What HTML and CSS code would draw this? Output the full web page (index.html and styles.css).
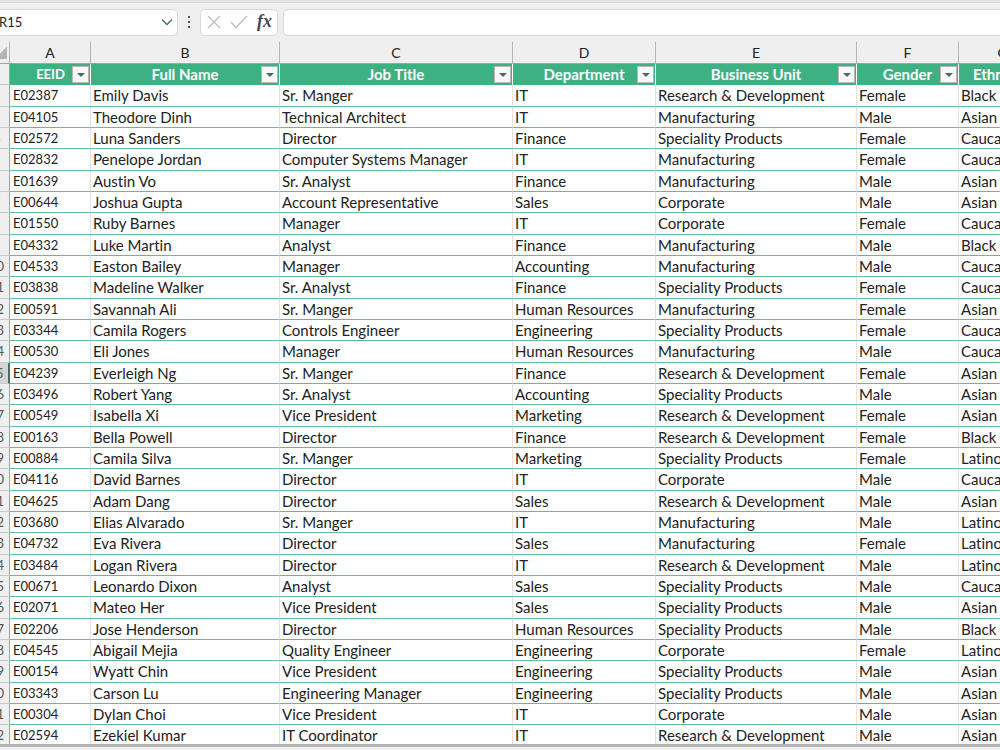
FILE: index.html
```
<!DOCTYPE html>
<html lang="en">
<head>
    <meta charset="UTF-8">
    <meta name="viewport" content="width=device-width, initial-scale=1.0">
    <title>Employee Data</title>
    <link rel="stylesheet" href="styles.css">
</head>
<body>
    <div class="formula-bar">
        <div class="name-box">
            <input type="text" class="name-input" value="R15" aria-label="Name box">
            <button type="button" class="icon-button" aria-label="Open name list">
                <svg width="12" height="8" viewBox="0 0 12 8"><path d="M1 1.500 6 6.500l5-5" fill="none" stroke="#4a7568" stroke-width="1.500"/></svg>
            </button>
        </div>
        <svg class="dots" width="4" height="14" viewBox="0 0 4 14"><path d="M1 1h2v2H1zM1 6h2v2H1zM1 11h2v2H1z" fill="#555"/></svg>
        <div class="formula-buttons">
            <button type="button" class="icon-button" aria-label="Cancel">
                <svg width="14" height="14" viewBox="0 0 14 14"><path d="M1 1l12 12M13 1 1 13" fill="none" stroke="#bcbcbc" stroke-width="1.300"/></svg>
            </button>
            <button type="button" class="icon-button" aria-label="Enter">
                <svg width="18" height="14" viewBox="0 0 18 14"><path d="M1 7l5 5.500L17 1" fill="none" stroke="#bcbcbc" stroke-width="1.300"/></svg>
            </button>
            <button type="button" class="icon-button fx" aria-label="Insert function">fx</button>
        </div>
        <input type="text" class="formula-input" aria-label="Formula">
    </div>

    <main class="sheet">
        <table>
            <colgroup>
                <col class="col-number">
                <col class="col-id">
                <col class="col-name">
                <col class="col-job">
                <col class="col-department">
                <col class="col-unit">
                <col class="col-gender">
                <col class="col-ethnicity">
            </colgroup>
            <thead>
                <tr class="letters">
                    <th class="corner"></th>
                    <th>A</th>
                    <th>B</th>
                    <th>C</th>
                    <th>D</th>
                    <th>E</th>
                    <th>F</th>
                    <th>G</th>
                </tr>
                <tr class="fields">
                    <th class="number">1</th>
                    <th class="id">EEID<button type="button" class="filter" aria-label="Filter EEID"></button></th>
                    <th>Full Name<button type="button" class="filter" aria-label="Filter Full Name"></button></th>
                    <th>Job Title<button type="button" class="filter" aria-label="Filter Job Title"></button></th>
                    <th>Department<button type="button" class="filter" aria-label="Filter Department"></button></th>
                    <th>Business Unit<button type="button" class="filter" aria-label="Filter Business Unit"></button></th>
                    <th>Gender<button type="button" class="filter" aria-label="Filter Gender"></button></th>
                    <th>Ethnicity</th>
                </tr>
            </thead>
            <tbody id="rows"></tbody>
        </table>
    </main>

    <script>
        const RD = 'Research & Development';
        const MF = 'Manufacturing';
        const SP = 'Speciality Products';
        const CO = 'Corporate';

        const employees = [
            ['E02387', 'Emily Davis', 'Sr. Manger', 'IT', RD, 'Female', 'Black'],
            ['E04105', 'Theodore Dinh', 'Technical Architect', 'IT', MF, 'Male', 'Asian'],
            ['E02572', 'Luna Sanders', 'Director', 'Finance', SP, 'Female', 'Caucasian'],
            ['E02832', 'Penelope Jordan', 'Computer Systems Manager', 'IT', MF, 'Female', 'Caucasian'],
            ['E01639', 'Austin Vo', 'Sr. Analyst', 'Finance', MF, 'Male', 'Asian'],
            ['E00644', 'Joshua Gupta', 'Account Representative', 'Sales', CO, 'Male', 'Asian'],
            ['E01550', 'Ruby Barnes', 'Manager', 'IT', CO, 'Female', 'Caucasian'],
            ['E04332', 'Luke Martin', 'Analyst', 'Finance', MF, 'Male', 'Black'],
            ['E04533', 'Easton Bailey', 'Manager', 'Accounting', MF, 'Male', 'Caucasian'],
            ['E03838', 'Madeline Walker', 'Sr. Analyst', 'Finance', SP, 'Female', 'Caucasian'],
            ['E00591', 'Savannah Ali', 'Sr. Manger', 'Human Resources', MF, 'Female', 'Asian'],
            ['E03344', 'Camila Rogers', 'Controls Engineer', 'Engineering', SP, 'Female', 'Caucasian'],
            ['E00530', 'Eli Jones', 'Manager', 'Human Resources', MF, 'Male', 'Caucasian'],
            ['E04239', 'Everleigh Ng', 'Sr. Manger', 'Finance', RD, 'Female', 'Asian'],
            ['E03496', 'Robert Yang', 'Sr. Analyst', 'Accounting', SP, 'Male', 'Asian'],
            ['E00549', 'Isabella Xi', 'Vice President', 'Marketing', RD, 'Female', 'Asian'],
            ['E00163', 'Bella Powell', 'Director', 'Finance', RD, 'Female', 'Black'],
            ['E00884', 'Camila Silva', 'Sr. Manger', 'Marketing', SP, 'Female', 'Latino'],
            ['E04116', 'David Barnes', 'Director', 'IT', CO, 'Male', 'Caucasian'],
            ['E04625', 'Adam Dang', 'Director', 'Sales', RD, 'Male', 'Asian'],
            ['E03680', 'Elias Alvarado', 'Sr. Manger', 'IT', MF, 'Male', 'Latino'],
            ['E04732', 'Eva Rivera', 'Director', 'Sales', MF, 'Female', 'Latino'],
            ['E03484', 'Logan Rivera', 'Director', 'IT', RD, 'Male', 'Latino'],
            ['E00671', 'Leonardo Dixon', 'Analyst', 'Sales', SP, 'Male', 'Caucasian'],
            ['E02071', 'Mateo Her', 'Vice President', 'Sales', SP, 'Male', 'Asian'],
            ['E02206', 'Jose Henderson', 'Director', 'Human Resources', SP, 'Male', 'Black'],
            ['E04545', 'Abigail Mejia', 'Quality Engineer', 'Engineering', CO, 'Female', 'Latino'],
            ['E00154', 'Wyatt Chin', 'Vice President', 'Engineering', SP, 'Male', 'Asian'],
            ['E03343', 'Carson Lu', 'Engineering Manager', 'Engineering', SP, 'Male', 'Asian'],
            ['E00304', 'Dylan Choi', 'Vice President', 'IT', CO, 'Male', 'Asian'],
            ['E02594', 'Ezekiel Kumar', 'IT Coordinator', 'IT', RD, 'Male', 'Asian']
        ];

        const selectedRow = 15;
        const tbody = document.getElementById('rows');

        employees.forEach((employee, index) => {
            const row = tbody.insertRow();
            const number = document.createElement('th');
            number.className = 'number';
            number.textContent = index + 2;
            if (index + 2 === selectedRow) {
                number.classList.add('selected');
            }
            row.appendChild(number);

            employee.forEach(value => {
                row.insertCell().textContent = value;
            });
            row.cells[1].className = 'id';
        });
    </script>
</body>
</html>
```
FILE: styles.css
```
:root {
    --chrome: #efefef;
    --green: #3eb183;
    --green-line: #5cbf95;
    --grid-line: #e2e2e2;
    --header-line: #a3a3a3;
    --text: #222;
}

* {
    box-sizing: border-box;
}

body {
    margin: 0;
    min-height: 100vh;
    overflow: hidden;
    background: var(--chrome);
    color: var(--text);
    font-family: Lato, "Open Sans", sans-serif;
    font-size: 15px;
    font-variant-ligatures: none;
    line-height: 20px;
}

button,
input {
    font: inherit;
    color: inherit;
}

.formula-bar {
    display: flex;
    align-items: center;
    height: 42px;
    border-top: 2px solid #e3e3e3;
    box-shadow: inset 0 1px #dadada;
}

.name-box,
.formula-buttons,
.formula-input {
    height: 27px;
    background: #fff;
    border: 1px solid #d8d8d8;
    border-radius: 5px;
}

.name-box {
    display: flex;
    align-items: center;
    width: 186px;
    margin-left: -8px;
    padding: 0 4px 0 6px;
}

.name-input {
    flex: 1;
    min-width: 0;
    padding: 0;
    border: none;
    background: none;
    outline: none;
    font-size: 13px;
}

.icon-button {
    display: flex;
    padding: 0;
    border: none;
    background: none;
}

.dots {
    margin: 0 9px;
}

.formula-buttons {
    display: flex;
    align-items: center;
    justify-content: space-between;
    width: 78px;
    padding: 0 5px 0 6px;
}

.fx {
    padding-bottom: 2px;
    font-family: "Liberation Serif", serif;
    font-size: 18px;
    font-style: italic;
    font-weight: bold;
    color: #4b4456;
}

.formula-input {
    flex: 1;
    min-width: 0;
    margin: 0 -8px 0 5px;
    padding: 0 8px;
}

/* row numbers run off the left edge of the window */
.sheet {
    margin-left: -16px;
    overflow: hidden;
    border-bottom: 3px solid #b5b5b5;
}

table {
    width: 1063px;
    table-layout: fixed;
    border-collapse: separate;
    border-spacing: 0;
    background: #fff;
}

.col-number { width: 26px; }
.col-id { width: 81px; }
.col-name { width: 189px; }
.col-job { width: 233px; }
.col-department { width: 143px; }
.col-unit { width: 201px; }
.col-gender { width: 102px; }
.col-ethnicity { width: 88px; }

th,
td {
    height: 21px;
    padding: 1px 2px 0;
    line-height: 19px;
    vertical-align: top;
    white-space: nowrap;
    overflow: hidden;
}

td {
    border-right: 1px solid var(--grid-line);
    border-bottom: 1px solid var(--green-line);
}

tbody tr:nth-child(3n + 1) > * {
    height: 22px;
}

tbody tr:last-child > * {
    height: 19px;
    line-height: 18px;
    border-bottom: none;
}

.id {
    padding-left: 3px;
    font-size: 13px;
}

.letters th {
    height: 22px;
    background: var(--chrome);
    border-right: 1px solid #b5b5b5;
    border-bottom: 1px solid var(--header-line);
    font-size: 14px;
    font-weight: normal;
}

.letters .corner {
    background: linear-gradient(135deg, transparent 50%, #b5b5b5 50%) no-repeat 11px 5px / 12px 12px var(--chrome);
}

.fields th {
    position: relative;
    background: var(--green);
    border-right: 1px solid #fff;
    color: #fff;
    font-weight: bold;
}

.fields .number,
.number {
    padding: 1px 0 0;
    background: var(--chrome);
    border-right: 1px solid var(--header-line);
    border-bottom: 1px solid #c9c9c9;
    color: #555;
    font-size: 13px;
    font-weight: normal;
    text-align: center;
}

.number.selected {
    background: #d5d5d5;
    border-right: 2px solid #43725c;
    color: #43725c;
}

.filter {
    display: flex;
    align-items: center;
    justify-content: center;
    position: absolute;
    top: 2px;
    right: 1px;
    width: 17px;
    height: 17px;
    padding: 0;
    border: 1px solid #b8b8b8;
    background: #fafafa;
}

.filter::before {
    content: "";
    border: 4px solid transparent;
    border-top-color: #4d6b60;
    border-bottom: none;
}
```
